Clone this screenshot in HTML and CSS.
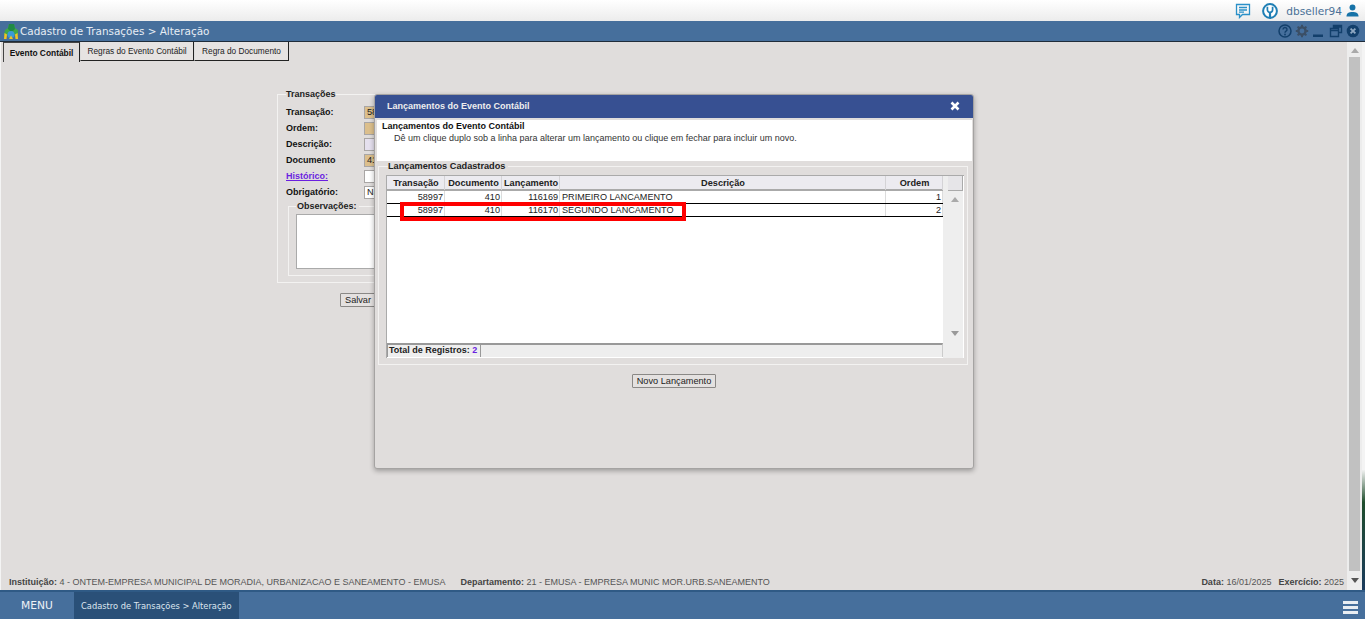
FILE: index.html
```html
<!DOCTYPE html>
<html lang="pt-BR">
<head>
<meta charset="utf-8">
<title>Cadastro de Transações</title>
<link rel="stylesheet" href="styles.css">
</head>
<body>
<header class="topbar">
  <svg class="ticon chat" viewBox="0 0 16 16"><path d="M1.500 1.500h13v10h-7l-3 3v-3h-3z M4 4.500h8 M4 7h8 M4 9.200h5" fill="none" stroke="#2a90c8" stroke-width="1.300"/></svg>
  <svg class="ticon wrench" viewBox="0 0 16 16"><circle cx="8" cy="8" r="6.900" fill="#fff" stroke="#1f7fb5" stroke-width="2"/><path d="M5.400 3.800v3a2.600 2.600 0 0 0 5.200 0v-3" fill="none" stroke="#1f7fb5" stroke-width="1.700"/><path d="M8 9v5" stroke="#1f7fb5" stroke-width="2.200"/></svg>
  <span class="username">dbseller94</span>
  <svg class="ticon user" viewBox="0 0 14 14"><circle cx="7" cy="3.700" r="3.200" fill="#1773a8"/><path d="M0.500 13.500c0-3.800 2.600-5 6.500-5s6.500 1.200 6.500 5z" fill="#1773a8"/></svg>
</header>

<div class="winbar">
  <svg class="logo" viewBox="0 0 16 17"><path d="M1 12L2 7l3-2 1-4h5l1 4 3 2 0 5z" fill="#3fa84a"/><path d="M6 1h5l1 5-2 2H7L5 6z" fill="#1f8a45"/><circle cx="8" cy="11.500" r="3.500" fill="#3a9ad9"/><path d="M1 16l.5-6 2.500 1.500L3.500 16zM15 16l-.5-6-2.500 1.500.5 4.500zM6 16l2-3.500 2 3.500z" fill="#f2c522"/></svg>
  <span class="wintitle">Cadastro de Transações &gt; Alteração</span>
  <div class="winicons">
    <svg class="wicon" viewBox="0 0 14 14"><circle cx="7" cy="7" r="6" fill="none" stroke="#123f6b" stroke-width="1.500"/><path d="M5 5.500a2 2 0 1 1 3 1.700c-.8.500-1 .9-1 1.600" fill="none" stroke="#123f6b" stroke-width="1.400"/><circle cx="7" cy="10.500" r=".9" fill="#123f6b"/></svg>
    <svg class="wicon" viewBox="0 0 14 14"><circle cx="7" cy="7" r="3.600" fill="none" stroke="#3b4f66" stroke-width="2.400"/><path d="M7 .8v2.400M7 10.800v2.400M.8 7h2.400M10.800 7h2.400M2.600 2.600l1.700 1.700M9.700 9.700l1.700 1.700M2.600 11.400l1.700-1.700M9.700 4.300l1.700-1.700" stroke="#3b4f66" stroke-width="2"/></svg>
    <svg class="wicon" viewBox="0 0 14 14"><rect x="1" y="10.500" width="10" height="2.500" fill="#123f6b"/></svg>
    <svg class="wicon" viewBox="0 0 14 14"><path d="M4.500 4V1.500h8v7H10M1.500 4.500h8v8h-8z M1.500 6.500h8 M4.500 3h8" fill="none" stroke="#123f6b" stroke-width="1.400"/></svg>
    <svg class="wicon" viewBox="0 0 14 14"><circle cx="7" cy="7" r="6.300" fill="#123f6b"/><path d="M4.600 4.600l4.800 4.800M9.400 4.600l-4.800 4.800" stroke="#8fa8c2" stroke-width="1.800"/></svg>
  </div>
</div>

<div class="workspace">
  <main class="content">
    <nav class="tabs">
      <span class="tab active">Evento Contábil</span>
      <span class="tab t2">Regras do Evento Contábil</span>
      <span class="tab t3">Regra do Documento</span>
    </nav>

    <div class="formarea">
      <fieldset class="formset">
        <legend>Transações</legend>
        <div class="frow"><label>Transação:</label><span class="inp tan">58997</span></div>
        <div class="frow"><label>Ordem:</label><span class="inp tan"></span></div>
        <div class="frow"><label>Descrição:</label><span class="inp lav"></span></div>
        <div class="frow"><label>Documento</label><span class="inp tan">410</span></div>
        <div class="frow"><label class="hist">Histórico:</label><span class="inp wht"></span></div>
        <div class="frow"><label>Obrigatório:</label><span class="inp sel">Não</span></div>
        <fieldset class="obsset">
          <legend>Observações:</legend>
          <div class="obsbox"></div>
        </fieldset>
      </fieldset>
      <button class="btn salvar" type="button">Salvar</button>
    </div>

    <footer class="status">
      <span><b>Instituição:</b> 4 - ONTEM-EMPRESA MUNICIPAL DE MORADIA, URBANIZACAO E SANEAMENTO - EMUSA</span>
      <span class="dep"><b>Departamento:</b> 21 - EMUSA - EMPRESA MUNIC MOR.URB.SANEAMENTO</span>
      <span class="date"><b>Data:</b> 16/01/2025</span>
      <span class="exer"><b>Exercício:</b> 2025</span>
    </footer>

    <section class="modal">
      <div class="mhead"><span>Lançamentos do Evento Contábil</span>
        <svg class="mclose" viewBox="0 0 10 10"><path d="M1.500 1.500l7 7M8.500 1.500l-7 7" stroke="#fff" stroke-width="2.600"/></svg>
      </div>
      <div class="mintro">
        <strong>Lançamentos do Evento Contábil</strong>
        <p>Dê um clique duplo sob a linha para alterar um lançamento ou clique em fechar para incluir um novo.</p>
      </div>
      <fieldset class="gridset">
        <legend>Lançamentos Cadastrados</legend>
        <div class="grid">
          <div class="gmain">
            <div class="gcols ghead">
              <span>Transação</span><span>Documento</span><span>Lançamento</span><span>Descrição</span><span>Ordem</span>
            </div>
            <div class="gcols grow">
              <span class="r">58997</span><span class="r">410</span><span class="r">116169</span><span>PRIMEIRO LANCAMENTO</span><span class="r">1</span>
            </div>
            <div class="gcols grow marked">
              <span class="r">58997</span><span class="r">410</span><span class="r">116170</span><span>SEGUNDO LANCAMENTO</span><span class="r">2</span>
            </div>
            <div class="highlight"></div>
          </div>
          <div class="gscroll">
            <div class="gcorner"></div>
            <i class="arr up"></i>
            <i class="arr down"></i>
          </div>
          <div class="gtotal"><b>Total de Registros: <em>2</em></b></div>
        </div>
      </fieldset>
      <div class="mactions"><button class="btn" type="button">Novo Lançamento</button></div>
    </section>
  </main>

  <aside class="pagescroll">
    <i class="arr up"></i>
    <div class="thumb"></div>
    <i class="arr down dark"></i>
  </aside>
  <div class="edge"></div>
</div>

<footer class="taskbar">
  <span class="menu">MENU</span>
  <span class="task">Cadastro de Transações &gt; Alteração</span>
  <div class="burger"><i></i><i></i><i></i></div>
</footer>
</body>
</html>
```
FILE: styles.css
```css
* { box-sizing: border-box; }
html, body { margin: 0; height: 619px; overflow: hidden; }
body { display: flex; flex-direction: column; font-family: "Liberation Sans", Arial, sans-serif; font-size: 9px; color: #111; background: #e0dddc; }

.topbar { height: 21px; flex: none; display: flex; align-items: center; justify-content: flex-end; padding: 0 6px 0 0; background: linear-gradient(#fff, #ececec); }
.ticon { display: block; }
.chat { width: 16px; height: 16px; margin-right: 11px; }
.wrench { width: 16px; height: 16px; margin-right: 8px; }
.username { font-family: "DejaVu Sans", sans-serif; font-size: 10.600px; color: #4a7196; margin-right: 4px; }
.user { width: 13px; height: 13px; }

.winbar { height: 21px; flex: none; display: flex; align-items: center; background: #466f9c; border-bottom: 1px solid #1f2c3a; padding-left: 3px; }
.logo { width: 16px; height: 17px; margin-right: 1px; }
.wintitle { font-family: "DejaVu Sans", sans-serif; font-size: 10.450px; color: #e6edf5; }
.winicons { margin-left: auto; display: flex; align-items: center; gap: 3px; padding-right: 5px; }
.wicon { width: 14px; height: 14px; display: block; }

.workspace { flex: 1; display: flex; min-height: 0; }
.content { flex: 1; position: relative; display: flex; flex-direction: column; background: #e0dddc; border-left: 1px solid #f4f4f4; }

.tabs { display: flex; height: 20px; padding-left: 2px; flex: none; }
.tab { display: flex; align-items: center; justify-content: center; padding: 0; font-size: 8.300px; height: 19px; color: #222; background: #e6e3e2; border-right: 1px solid #222; border-bottom: 1px solid #222; border-left: 1px solid #ddd; white-space: nowrap; }
.t2 { width: 114px; }
.t3 { width: 95px; }
.tab.active { height: 20px; width: 77px; padding: 1px 0 0 0; font-weight: bold; font-size: 8.400px; color: #111; background: #e0dddc; border-left: 1px solid #444; border-top: 1px solid #444; border-bottom: 0; }

.formarea { flex: 1; padding: 27px 0 0 276px; min-height: 0; }
.formset { width: 330px; height: 194px; margin: 0; padding: 4px 0 0 8px; border: 1px solid #f3f2f1; }
.formset legend { padding: 0; margin-left: 0; font-weight: bold; font-size: 9px; color: #222; line-height: 11px; }
.frow { display: flex; align-items: center; height: 16px; }
.frow label { width: 78px; font-weight: bold; font-size: 9px; }
.frow .hist { color: #6a1fe0; text-decoration: underline; }
.inp { width: 200px; height: 13px; border: 1px solid #a9a6a5; font-size: 9.200px; line-height: 11px; padding-left: 2px; color: #222; }
.tan { background: #dcbf8c; }
.lav { background: #e5e0ee; }
.wht { background: #fff; }
.sel { background: #fff; }
.obsset { width: 280px; height: 75px; margin: 1px 0 0 2px; padding: 2px 0 0 7px; border: 1px solid #f3f2f1; }
.obsset legend { margin-left: 0; padding: 0 2px 0 1px; font-weight: bold; font-size: 9px; color: #222; }
.obsbox { width: 260px; height: 55px; background: #fff; border: 1px solid #aaa; }

.btn { display: block; height: 14px; padding: 0 4px; font: 9.200px "Liberation Sans", Arial, sans-serif; color: #222; background: #e4e1e0; border: 1px solid #8a8886; border-radius: 1px; }
.salvar { margin: 10px 0 0 63px; }

.status { flex: none; height: 18px; display: flex; align-items: center; padding: 2px 3px 0 8px; font-size: 9px; color: #555; }
.status b { color: #444; }
.dep { margin-left: 15px; }
.date { margin-left: auto; }
.exer { margin-left: 7px; }

.modal { position: absolute; left: 373px; top: 52px; width: 600px; height: 375px; background: #e0dddc; border: 1px solid #a5a3a2; border-radius: 3px; box-shadow: 0 2px 5px rgba(0,0,0,.3); display: flex; flex-direction: column; }
.mhead { height: 23px; flex: none; display: flex; align-items: center; justify-content: space-between; padding: 0 13px 1px 12px; background: #375092; color: #eee; font-weight: bold; font-size: 9px; border-radius: 2px 2px 0 0; }
.mclose { width: 10px; height: 10px; }
.mintro { height: 41px; flex: none; margin: 2px 1px 0 2px; padding: 0 0 0 5px; background: #fff; font-size: 9px; color: #333; }
.mintro strong { color: #111; display: block; line-height: 12px; }
.mintro p { margin: 0 0 0 12px; line-height: 12px; }

.gridset { flex: none; height: 204px; margin: 0 5px 0 3px; padding: 4px 3px 0 7px; border: 1px solid #f3f2f1; }
.gridset legend { margin-left: 2px; padding: 0 3px 0 0; font-weight: bold; font-size: 9.200px; color: #222; line-height: 10px; }
.grid { height: 183px; display: grid; grid-template-columns: 556px 21px; grid-template-rows: 167px 15px; background: #fff; border-left: 1px solid #aaa; border-top: 1px solid #aaa; }
.gmain { position: relative; background: #fff; }
.gcols { display: grid; grid-template-columns: 58px 57px 58px 326px 57px; }
.ghead { height: 15px; background: #ecebf0; border-bottom: 2px solid #aaa; font-weight: bold; font-size: 9.200px; text-align: center; color: #222; }
.ghead span { line-height: 14px; padding-left: 1px; border-right: 1px solid #d4d3d6; }
.grow { height: 12px; font-size: 9.100px; line-height: 12px; color: #222; }
.grow span { padding: 0 1px 0 2px; border-right: 1px solid #dcdcdc; white-space: nowrap; }
.grow .r { text-align: right; }
.marked { border-top: 1px solid #000; border-bottom: 1px solid #000; height: 14px; }
.highlight { position: absolute; left: 13px; top: 26px; width: 286px; height: 19px; border: 4px solid #f00; }
.gscroll { position: relative; background: #eee; grid-row: 1 / 3; grid-column: 2; border-right: 1px solid #fff; }
.gcorner { height: 15px; margin-left: 5px; background: #e6e5e8; border-right: 1px solid #aaa; border-bottom: 1px solid #aaa; }
.arr { position: absolute; left: 8px; width: 0; height: 0; border-left: 4px solid transparent; border-right: 4px solid transparent; }
.arr.up { top: 21px; border-bottom: 5px solid #aaa; }
.arr.down { bottom: 22px; border-top: 5px solid #999; }
.gtotal { grid-row: 2; grid-column: 1; height: 14px; width: 556px; background: #eee; border-top: 2px solid #999; border-left: 1px solid #999; border-right: 1px solid #ccc; font-size: 9px; line-height: 11px; padding-left: 1px; }
.gtotal b { display: inline-block; padding-right: 3px; border-right: 1px solid #999; height: 12px; color: #222; }
.gtotal em { font-style: normal; color: #6a1fe0; }

.mactions { display: flex; justify-content: center; padding: 9px 0 0 0; }

.pagescroll { position: relative; width: 15px; flex: none; background: #ededed; }
.pagescroll .arr.up { left: 3.500px; top: 6px; }
.pagescroll .arr.down { left: 3.500px; bottom: 7px; }
.pagescroll .arr.dark { border-top-color: #555; }
.thumb { position: absolute; left: 2px; right: 2px; top: 15px; bottom: 19px; background: #c1c1c1; }
.edge { width: 3px; flex: none; background: linear-gradient(#f4f4f4 0, #f4f4f4 78%, #1f4d2c 84%, #1a3a5c 100%); }

.taskbar { height: 29px; flex: none; display: flex; align-items: stretch; background: #466f9c; border-top: 2px solid #2f5a85; }
.menu { width: 74px; display: flex; align-items: center; justify-content: center; font-family: "DejaVu Sans", sans-serif; font-size: 10.700px; color: #eef2f6; }
.task { width: 165px; display: flex; align-items: center; padding-left: 7px; font-family: "DejaVu Sans", sans-serif; font-size: 8.300px; color: #dde6ef; background: #2a5078; white-space: nowrap; }
.burger { margin: 9px 7px 0 auto; width: 15px; display: flex; flex-direction: column; gap: 2px; }
.burger i { height: 3px; background: #e8edf2; display: block; }
```
